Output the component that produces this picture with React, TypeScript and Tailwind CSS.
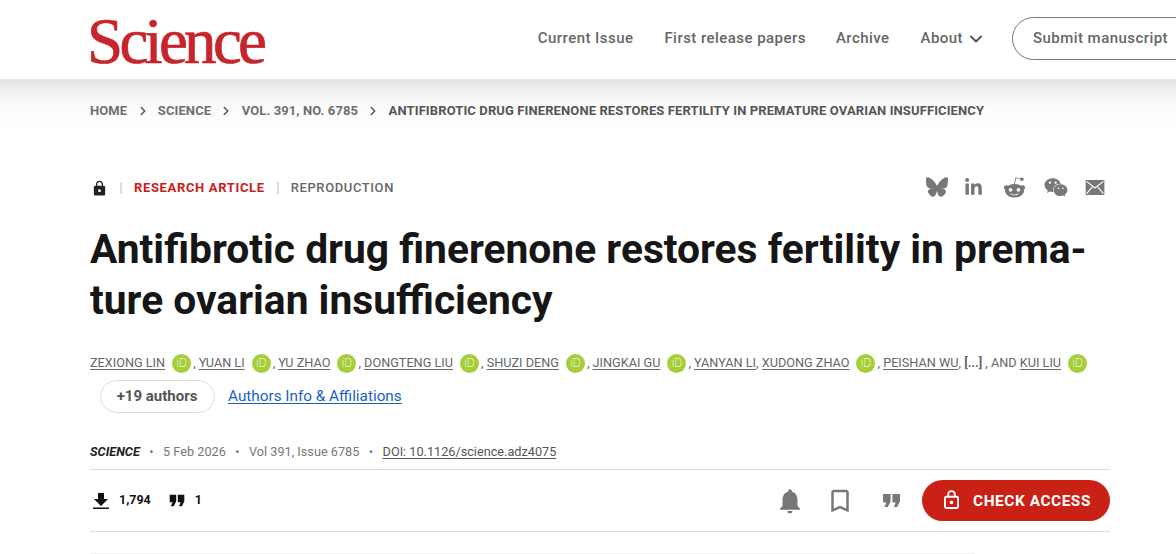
import React from "react";
import { ChevronRight, ChevronDown } from "lucide-react";
import { FaBluesky } from "react-icons/fa6";
import { FaLinkedinIn, FaRedditAlien, FaWeixin } from "react-icons/fa";
import { MdNotifications, MdBookmarkBorder, MdLock } from "react-icons/md";

const Orcid = () => (
  <span className="ml-[7px] mr-[2px] inline-flex h-[19px] w-[19px] shrink-0 items-center justify-center rounded-full bg-[#a6ce39] text-[12px] font-extralight leading-none text-white">
    iD
  </span>
);

const Quote = ({ className }: { className: string }) => (
  <svg viewBox="0 0 20 16" className={className} fill="currentColor">
    <path d="M1 1h8v8l-3 6H2.500l2-5H1zM11 1h8v8l-3 6h-3.500l2-5H11z" />
  </svg>
);

const Author = ({ name }: { name: string }) => (
  <span className="underline decoration-[#6a6a6a] underline-offset-2">{name}</span>
);

const Crumb = ({ text }: { text: string }) => (
  <>
    <span className="text-[#6f6f6f]">{text}</span>
    <ChevronRight className="mx-[8.250px] h-[14px] w-[14px] text-[#555]" strokeWidth={2.5} />
  </>
);

const Dot = () => <span className="mx-[9.500px] text-[#777]">•</span>;

export default function App() {
  return (
    <div className="h-[554px] w-[1176px] overflow-hidden bg-white font-['Roboto',sans-serif] text-[#111]">
      <header className="relative flex h-[79px] items-center overflow-hidden bg-white pl-[87px]">
        <span className="mt-[3px] font-['Liberation_Serif',serif] text-[65px] leading-none tracking-[-3.7px] text-[#c8242b] [-webkit-text-stroke:0.7px_#c8242b]">
          Science
        </span>
        <nav className="ml-auto flex shrink-0 -translate-y-px translate-x-[31px] items-center text-[15px] font-medium tracking-[0.45px] text-[#666]">
          <span>Current Issue</span>
          <span className="ml-[31px]">First release papers</span>
          <span className="ml-[30px]">Archive</span>
          <span className="ml-[31px]">About</span>
          <ChevronDown className="ml-[3px] h-[20px] w-[20px] text-[#555]" strokeWidth={2.4} />
          <span className="ml-[26px] flex h-[43px] w-[195px] items-center rounded-[22px] border border-[#777] pl-[20px]">
            Submit manuscript
          </span>
        </nav>
      </header>

      <main className="bg-[linear-gradient(#e2e2e2_0,#f1f1f1_12px,#fafafa_26px,#fff_48px)] pt-[24px]">
        <div className="ml-[90px] w-[1020px]">
          <div className="flex h-[16px] items-center text-[13px] font-bold tracking-[0.11px] text-[#555]">
            <Crumb text="HOME" />
            <Crumb text="SCIENCE" />
            <Crumb text="VOL. 391, NO. 6785" />
            <span>ANTIFIBROTIC DRUG FINERENONE RESTORES FERTILITY IN PREMATURE OVARIAN INSUFFICIENCY</span>
          </div>

          <div className="mt-[57px] flex h-[24px] items-center">
            <MdLock className="ml-px h-[17px] w-[17px] text-[#222]" />
            <span className="ml-[12px] h-[12px] w-[2px] bg-[#ddd]" />
            <span className="ml-[12px] text-[13px] font-bold tracking-[0.65px] text-[#c8201a]">RESEARCH ARTICLE</span>
            <span className="ml-[12px] h-[12px] w-[2px] bg-[#ddd]" />
            <span className="ml-[12px] text-[13px] font-medium tracking-[0.6px] text-[#666]">REPRODUCTION</span>
            <div className="ml-auto mr-[5px] flex -translate-y-px items-center gap-[18px] text-[#777]">
              <FaBluesky className="h-[20px] w-[22px]" />
              <FaLinkedinIn className="-ml-[2px] h-[19px] w-[19px]" />
              <FaRedditAlien className="ml-[2px] h-[23px] w-[23px]" />
              <FaWeixin className="h-[23px] w-[24px]" />
              <svg viewBox="0 0 20 16" className="-ml-px h-[15px] w-[20px]" fill="currentColor">
                <path d="M0 0h20v16H0z" />
                <path d="M1 1.500l9 7 9-7M1 14.500l6-7M19 14.500l-6-7" fill="none" stroke="#fff" strokeWidth="1.200" />
              </svg>
            </div>
          </div>

          <h1 className="mt-[24px] text-[40.75px] font-bold leading-[51px] text-[#161616]">
            Antifibrotic drug finerenone restores fertility in prema-
            <br />
            ture ovarian insufficiency
          </h1>

          <div className="mt-[27px] flex h-[20px] items-center whitespace-nowrap text-[12.7px] text-[#666]">
            <Author name="ZEXIONG LIN" /><Orcid />,&nbsp;
            <Author name="YUAN LI" /><Orcid />,&nbsp;
            <Author name="YU ZHAO" /><Orcid />,&nbsp;
            <Author name="DONGTENG LIU" /><Orcid />,&nbsp;
            <Author name="SHUZI DENG" /><Orcid />,&nbsp;
            <Author name="JINGKAI GU" /><Orcid />,&nbsp;
            <Author name="YANYAN LI" />,&nbsp;
            <Author name="XUDONG ZHAO" /><Orcid />,&nbsp;
            <Author name="PEISHAN WU" />,&nbsp;
            <b className="font-bold">[...]</b>&nbsp;, AND&nbsp;
            <Author name="KUI LIU" /><Orcid />
          </div>

          <div className="mt-[7px] ml-[10px] flex h-[33px] items-center">
            <span className="flex h-[33px] w-[115px] items-center justify-center rounded-full border border-[#ddd] pr-[1px] text-[15px] font-bold text-[#555]">
              +19 authors
            </span>
            <span className="ml-[13px] text-[15.3px] text-[#1a5fc0] underline underline-offset-2">
              Authors Info &amp; Affiliations
            </span>
          </div>

          <div className="mt-[29px] flex h-[20px] items-center text-[12.7px] text-[#777]">
            <b className="font-bold italic text-[#222]">SCIENCE</b>
            <Dot />
            <span>5 Feb 2026</span>
            <Dot />
            <span>Vol 391, Issue 6785</span>
            <Dot />
            <span className="text-[#555] underline underline-offset-2">DOI: 10.1126/science.adz4075</span>
          </div>

          <div className="mt-[7px] flex h-[63px] items-center border-y border-[#ddd]">
            <svg viewBox="0 0 16 16" className="ml-[3px] h-[16px] w-[16px] text-[#111]" fill="currentColor">
              <path d="M5 0h6v6h4l-7 7-7-7h4zM0 14.500h16V16H0z" />
            </svg>
            <span className="ml-[10px] text-[12.5px] font-bold">1,794</span>
            <Quote className="ml-[17px] h-[13px] w-[18px] text-[#111]" />
            <span className="ml-[9px] text-[12.5px] font-bold">1</span>
            <div className="ml-auto flex items-center">
              <MdNotifications className="h-[30px] w-[30px] text-[#777]" />
              <MdBookmarkBorder className="ml-[20px] h-[30px] w-[30px] text-[#777]" />
              <Quote className="ml-[26px] h-[15px] w-[21px] text-[#777]" />
              <span className="ml-[20px] flex h-[41px] w-[188px] items-center justify-center rounded-full bg-[#c92116] pl-[3px] text-[15.4px] font-bold tracking-[0.55px] text-white">
                <svg viewBox="0 0 16 20" className="mb-[2px] mr-[14px] h-[19px] w-[15px]" fill="none" stroke="currentColor" strokeWidth="2">
                  <rect x="1" y="7" width="14" height="12" rx="1.500" />
                  <path d="M4.500 7V4.500a3.500 3.500 0 0 1 7 0V7" />
                  <circle cx="8" cy="13" r="1" fill="currentColor" />
                </svg>
                <span className="pt-[2px]">CHECK ACCESS</span>
              </span>
            </div>
          </div>
          <div className="mt-[21px] h-px w-[885px] bg-[#f2f2f2]" />
        </div>
      </main>
    </div>
  );
}
